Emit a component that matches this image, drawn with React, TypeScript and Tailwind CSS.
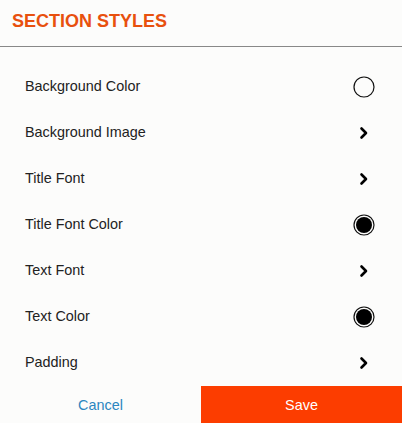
import React from "react";

type Kind = "empty" | "filled" | "chevron";

const rows: { label: string; kind: Kind }[] = [
  { label: "Background Color", kind: "empty" },
  { label: "Background Image", kind: "chevron" },
  { label: "Title Font", kind: "chevron" },
  { label: "Title Font Color", kind: "filled" },
  { label: "Text Font", kind: "chevron" },
  { label: "Text Color", kind: "filled" },
  { label: "Padding", kind: "chevron" },
];

function Icon({ kind }: { kind: Kind }) {
  if (kind === "chevron") {
    return (
      <svg width="22" height="22" viewBox="0 0 22 22">
        <path d="M8.5 6.5 L13 11 L8.5 15.5" fill="none" stroke="#000" strokeWidth="2.6" strokeLinecap="round" strokeLinejoin="round" />
      </svg>
    );
  }
  return (
    <svg width="22" height="22" viewBox="0 0 22 22">
      <circle cx="11" cy="11" r="10" fill="none" stroke="#111" strokeWidth="1.2" />
      {kind === "filled" && <circle cx="11" cy="11" r="8" fill="#000" />}
    </svg>
  );
}

export default function App() {
  return (
    <div className="w-[402px] h-[423px] bg-[#fcfcfb] flex flex-col overflow-hidden" style={{ fontFamily: '"Liberation Sans", Arial, sans-serif' }}>
      <div className="h-[47px] pl-[12px] pt-[11px] border-b border-[#888888]">
        <h1 className="text-[18px] leading-[21px] font-bold text-[#e8500e]">SECTION STYLES</h1>
      </div>
      <div className="flex flex-col pt-[17px]">
        {rows.map((r) => (
          <div key={r.label} className="h-[46px] flex items-center justify-between pl-[25px] pr-[27px]">
            <span className="text-[14.4px] text-[#222222]">{r.label}</span>
            <Icon kind={r.kind} />
          </div>
        ))}
      </div>
      <div className="mt-auto flex h-[37px]">
        <button className="flex-1 flex items-center justify-center pt-[3px] text-[14.4px] text-[#2c86c0]">Cancel</button>
        <button className="w-[201px] flex items-center justify-center pt-[3px] text-[14.4px] text-white bg-[#fc3d00]">Save</button>
      </div>
    </div>
  );
}
